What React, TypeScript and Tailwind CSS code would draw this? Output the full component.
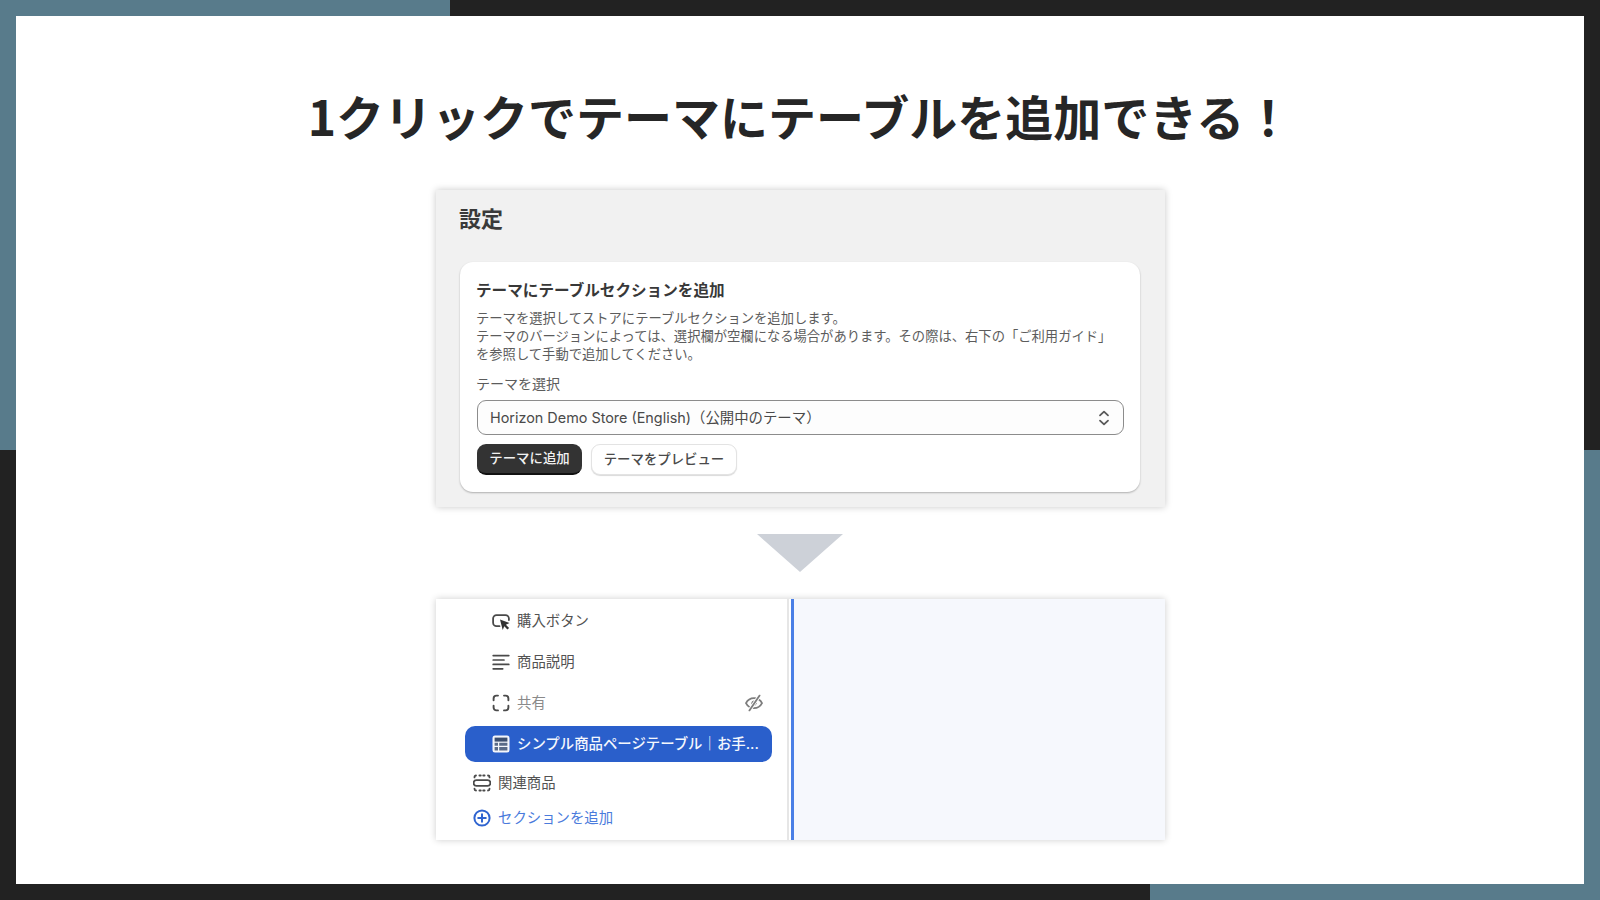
const uiFont = "font-['Inter','Noto_Sans_CJK_JP',sans-serif]";

function BuyButtonIcon() {
  return (
    <svg viewBox="0 0 18 18" className="w-[18px] h-[18px] shrink-0" fill="none">
      <path d="M7.5 14.2H4.5A3.4 3.4 0 0 1 1.1 10.8V6.6a3.4 3.4 0 0 1 3.4-3.4h9a3.4 3.4 0 0 1 3.4 3.4V8" stroke="#4a4a4a" strokeWidth="1.8" strokeLinecap="round" />
      <path d="M8 7.5l9.5 3.6-3.6 1.6 3.2 3.2-1.7 1.6-3.1-3.2-1.6 3.6z" fill="#333333" />
    </svg>
  );
}

function LinesIcon() {
  return (
    <svg viewBox="0 0 18 18" className="w-[18px] h-[18px] shrink-0" fill="none" stroke="#4a4a4a" strokeWidth="1.7" strokeLinecap="round">
      <path d="M1.2 2.6h15.6M1.2 7h10.8M1.2 11.4h15.6M1.2 15.8h9.5" />
    </svg>
  );
}

function FrameIcon() {
  return (
    <svg viewBox="0 0 18 18" className="w-[18px] h-[18px] shrink-0" fill="none" stroke="#4a4a4a" strokeWidth="1.9" strokeLinecap="round">
      <path d="M6 1.6H4.4a2.8 2.8 0 0 0-2.8 2.8V6.2M12 1.6h1.6a2.8 2.8 0 0 1 2.8 2.8V6.2M6 16.4H4.4a2.8 2.8 0 0 1-2.8-2.8V11.8M12 16.4h1.6a2.8 2.8 0 0 0 2.8-2.8V11.8" />
    </svg>
  );
}

function EyeSlashIcon() {
  return (
    <svg viewBox="0 0 18 18" className="w-[18px] h-[18px] shrink-0" fill="none" stroke="#7d7d7d" strokeLinecap="round">
      <path d="M1 9.2C2.6 6 5.4 4.2 9 4.2s6.4 1.8 8 5c-1.6 3.2-4.4 5-8 5s-6.4-1.8-8-5z" strokeWidth="1.8" />
      <circle cx="9" cy="9.2" r="2.2" fill="#7d7d7d" strokeWidth="1" />
      <path d="M14.6 1.6 4.4 16.4" stroke="#ffffff" strokeWidth="3.6" />
      <path d="M14.6 1.6 4.4 16.4" strokeWidth="1.8" />
    </svg>
  );
}

function TableIcon() {
  return (
    <svg viewBox="0 0 18 18" className="w-[18px] h-[18px] shrink-0">
      <rect x="0.5" y="0.5" width="17" height="17" rx="2.5" fill="#f4f6fb" />
      <rect x="2.6" y="2.6" width="12.8" height="4" fill="#3d4f6e" />
      <path d="M2.6 7.8h3.4v3h-3.4zM7.2 7.8h8.2v3H7.2zM2.6 12h3.4v3.4H2.6zM7.2 12h8.2v3.4H7.2z" fill="#5a6b88" />
    </svg>
  );
}

function RelatedIcon() {
  return (
    <svg viewBox="0 0 18 18" className="w-[18px] h-[18px] shrink-0" fill="none" stroke="#4a4a4a" strokeWidth="1.8" strokeLinecap="round">
      <path d="M1.5 3.4V3A1.5 1.5 0 0 1 3 1.5M6.4 1.5h1.4M10.2 1.5h1.4M15 1.5A1.5 1.5 0 0 1 16.5 3v.4" />
      <path d="M3.4 6.2h11.2a2.8 2.8 0 0 1 0 5.6H3.4a2.8 2.8 0 0 1 0-5.6z" />
      <path d="M1.5 14.6v.4A1.5 1.5 0 0 0 3 16.5M6.4 16.5h1.4M10.2 16.5h1.4M15 16.5a1.5 1.5 0 0 0 1.5-1.5v-.4" />
    </svg>
  );
}

function AddCircleIcon() {
  return (
    <svg viewBox="0 0 18 18" className="w-[18px] h-[18px] shrink-0" fill="none" stroke="#2f64d0" strokeWidth="2" strokeLinecap="round">
      <circle cx="9" cy="9" r="7.6" />
      <path d="M9 5.2v7.6M5.2 9h7.6" />
    </svg>
  );
}

function SelectArrows() {
  return (
    <svg viewBox="0 0 12 16" className="w-[12px] h-[16px] shrink-0" fill="none" stroke="#5a5a5a" strokeWidth="1.8" strokeLinecap="round" strokeLinejoin="round">
      <path d="M2 5.4 6 1.6l4 3.8M2 10.6l4 3.8 4-3.8" />
    </svg>
  );
}

export default function App() {
  return (
    <div className="relative w-[1600px] h-[900px] overflow-hidden grid grid-cols-[450px_700px_450px] grid-rows-2 bg-[#222222]">
      {/* corner blocks behind the slide */}
      <div className="bg-[#587b8b]" />
      <div className="col-start-3 row-start-2 bg-[#587b8b]" />

      <main className="absolute inset-4 bg-white flex flex-col items-start">
        <h1 className="self-center mt-[63px] h-[72px] leading-[72px] text-[48px] font-bold text-[#262626] whitespace-nowrap font-['Noto_Sans_CJK_JP',sans-serif]">
          1クリックでテーマにテーブルを追加できる！
        </h1>

        {/* Settings card */}
        <section className={`ml-[420px] mt-[39px] w-[729px] h-[317px] bg-[#f1f1f1] shadow-[0_0_7px_rgba(0,0,0,0.22)] pl-6 pr-[25px] flex flex-col ${uiFont}`}>
          <h2 className="-ml-px mt-[15px] h-[28px] leading-[28px] text-[22px] font-bold text-[#3a3a3a]">設定</h2>
          <div className="mt-[29px] h-[230px] bg-white rounded-[13px] shadow-[0_1px_2px_rgba(0,0,0,0.28)] pl-[17px] pr-[16px] flex flex-col">
            <h3 className="-ml-px mt-[18px] h-[22px] leading-[22px] text-[15.6px] font-semibold text-[#383838]">
              テーマにテーブルセクションを追加
            </h3>
            <p className="-ml-px mt-[7px] text-[13.3px] leading-[18px] text-[#5c5c5c] whitespace-nowrap">
              テーマを選択してストアにテーブルセクションを追加します。
              <br />
              テーマのバージョンによっては、選択欄が空欄になる場合があります。その際は、右下の「ご利用ガイド」
              <br />
              を参照して手動で追加してください。
            </p>
            <label className="-ml-px mt-[12px] h-[18px] leading-[18px] text-[14px] text-[#5c5c5c]">テーマを選択</label>
            <div className="mt-[7px] h-[35px] rounded-[9px] border border-[#8c8c8c] bg-[#fdfdfd] pl-3 pr-[13px] flex items-center justify-between">
              <span className="text-[14.4px] text-[#4a4a4a]">Horizon Demo Store (English)（公開中のテーマ）</span>
              <SelectArrows />
            </div>
            <div className="mt-[9px] flex gap-[9px]">
              <button className="w-[105px] h-[31px] rounded-[9px] bg-[#333333] border-b-2 border-[#111111] text-[13.4px] font-medium text-[#f2f2f2]">
                テーマに追加
              </button>
              <button className="w-[146px] h-[31px] rounded-[9px] bg-white border border-[#e3e3e3] shadow-[0_1px_1px_rgba(0,0,0,0.15)] text-[13.4px] font-medium text-[#4a4a4a]">
                テーマをプレビュー
              </button>
            </div>
          </div>
        </section>

        {/* Down arrow */}
        <svg viewBox="0 0 86 38" className="self-center mt-[27px] w-[86px] h-[38px] shrink-0">
          <path d="M0 0h86L43 38z" fill="#cdd1d8" />
        </svg>

        {/* Editor sidebar card */}
        <section className={`ml-[420px] mt-[27px] w-[729px] h-[241px] bg-white shadow-[0_0_7px_rgba(0,0,0,0.2)] flex ${uiFont}`}>
          <div className="w-[353px] border-r-2 border-[#e6e6e6] text-[14.4px] text-[#525252] flex flex-col">
            <div className="h-[43px] pl-[56px] flex items-center gap-[7px]">
              <BuyButtonIcon />
              <span>購入ボタン</span>
            </div>
            <div className="h-[40px] pl-[56px] flex items-center gap-[7px]">
              <LinesIcon />
              <span>商品説明</span>
            </div>
            <div className="h-[41px] pl-[56px] pr-[24px] flex items-center gap-[7px]">
              <FrameIcon />
              <span className="flex-1 text-[#8a8a8a]">共有</span>
              <EyeSlashIcon />
            </div>
            <div className="mt-[3px] ml-[29px] w-[307px] h-[36px] rounded-[10px] bg-[#2a5fcb] pl-[27px] pr-[13px] flex items-center gap-[7px]">
              <TableIcon />
              <span className="truncate font-medium text-[#f4f7fd]">シンプル商品ページテーブル｜お手...</span>
            </div>
            <div className="h-[41px] pl-[37px] flex items-center gap-[7px]">
              <RelatedIcon />
              <span>関連商品</span>
            </div>
            <div className="h-[30px] pl-[37px] flex items-center gap-[7px] text-[#4a7bdc]">
              <AddCircleIcon />
              <span>セクションを追加</span>
            </div>
          </div>
          <div className="ml-[2px] flex-1 border-l-[3px] border-[#4a7fe6] bg-[#f6f8fd]" />
        </section>
      </main>
    </div>
  );
}
